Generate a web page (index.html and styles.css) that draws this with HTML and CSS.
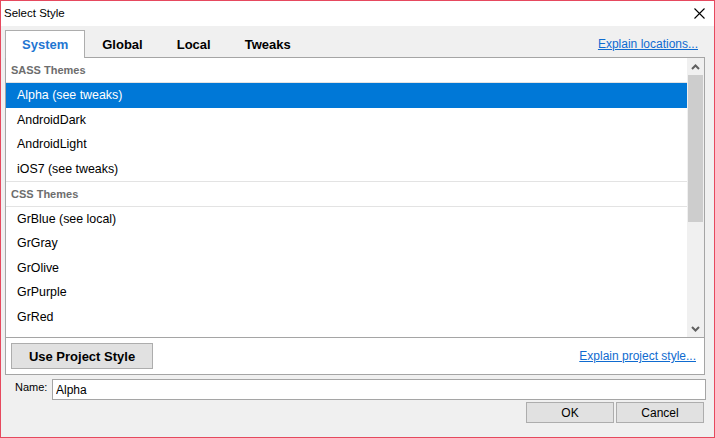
FILE: index.html
```html
<!DOCTYPE html>
<html lang="en">
<head>
    <meta charset="UTF-8">
    <title>Select Style</title>
    <link rel="stylesheet" href="styles.css">
</head>
<body>
    <div class="dialog">
        <div class="titlebar">
            <span class="titlebar__title">Select Style</span>
            <span class="titlebar__close">
                <svg width="11" height="11" viewBox="0 0 11 11">
                    <path d="M0.5 0.5 L10.5 10.5 M10.5 0.5 L0.5 10.5" stroke="#000" stroke-width="1.1" fill="none"/>
                </svg>
            </span>
        </div>

        <div class="dialog__body">
            <div class="tabs">
                <div class="tabs__nav">
                    <button class="tabs__btn tabs__btn--active">System</button>
                    <button class="tabs__btn">Global</button>
                    <button class="tabs__btn">Local</button>
                    <button class="tabs__btn">Tweaks</button>
                </div>
                <a class="link tabs__link" href="#">Explain locations...</a>
            </div>

            <div class="panel">
                <div class="themes">
                    <ul class="themes__list">
                        <li class="themes__group themes__group--first">SASS Themes</li>
                        <li class="themes__item themes__item--selected">Alpha (see tweaks)</li>
                        <li class="themes__item">AndroidDark</li>
                        <li class="themes__item">AndroidLight</li>
                        <li class="themes__item">iOS7 (see tweaks)</li>
                        <li class="themes__group">CSS Themes</li>
                        <li class="themes__item">GrBlue (see local)</li>
                        <li class="themes__item">GrGray</li>
                        <li class="themes__item">GrOlive</li>
                        <li class="themes__item">GrPurple</li>
                        <li class="themes__item">GrRed</li>
                    </ul>
                    <div class="scrollbar">
                        <span class="scrollbar__arrow">
                            <svg width="9" height="6" viewBox="0 0 9 6">
                                <polyline points="1,5 4.5,1.5 8,5" stroke="#606060" stroke-width="2" fill="none"/>
                            </svg>
                        </span>
                        <span class="scrollbar__track">
                            <span class="scrollbar__thumb"></span>
                        </span>
                        <span class="scrollbar__arrow">
                            <svg width="9" height="6" viewBox="0 0 9 6">
                                <polyline points="1,1 4.5,4.5 8,1" stroke="#606060" stroke-width="2" fill="none"/>
                            </svg>
                        </span>
                    </div>
                </div>
                <div class="panel__footer">
                    <button class="btn btn--large">Use Project Style</button>
                    <a class="link" href="#">Explain project style...</a>
                </div>
            </div>

            <div class="name-row">
                <label class="name-row__label" for="style-name">Name:</label>
                <input class="name-row__input" id="style-name" type="text" value="Alpha">
            </div>

            <div class="actions">
                <button class="btn">OK</button>
                <button class="btn">Cancel</button>
            </div>
        </div>
    </div>
</body>
</html>
```

FILE: styles.css
```css
* {
    box-sizing: border-box;
}

body {
    margin: 0;
    font-family: "Liberation Sans", Arial, sans-serif;
    font-size: 12px;
    color: #000;
}

.dialog {
    width: 715px;
    height: 438px;
    border: 1px solid #e6495e;
    background: #f0f0f0;
    display: flex;
    flex-direction: column;
}

/* Title bar */
.titlebar {
    height: 25px;
    background: #fff;
    display: flex;
    align-items: center;
    justify-content: space-between;
    padding: 0 9px 0 3px;
}

.titlebar__title {
    font-size: 11.5px;
    margin-top: -1px;
}

.titlebar__close {
    display: flex;
    margin-top: -1px;
}

.dialog__body {
    flex: 1;
    padding: 0 9px 0 4px;
    display: flex;
    flex-direction: column;
}

/* Tabs */
.tabs {
    height: 31px;
    display: flex;
    align-items: flex-end;
    justify-content: space-between;
}

.tabs__nav {
    display: flex;
    align-items: flex-end;
}

.tabs__btn {
    position: relative;
    z-index: 1;
    height: 27px;
    margin-bottom: -1px;
    padding: 0 16px 1px;
    border: 1px solid transparent;
    border-bottom: none;
    background: transparent;
    font-family: inherit;
    font-size: 13px;
    font-weight: bold;
    color: #000;
    cursor: pointer;
}

.tabs__btn--active {
    height: 28px;
    background: #fff;
    border-color: #adadad;
    color: #1f76d2;
}

.tabs__link {
    margin: 0 7px 6px 0;
}

.link {
    color: #0f6bd0;
    text-decoration: underline;
    font-size: 12px;
}

/* Main panel */
.panel {
    height: 318px;
    border: 1px solid #a5a5a5;
    background: #fff;
    display: flex;
    flex-direction: column;
}

.themes {
    height: 280px;
    border-bottom: 1px solid #a5a5a5;
    display: flex;
    overflow: hidden;
}

.themes__list {
    flex: 1;
    margin: 0;
    padding: 0;
    list-style: none;
    overflow: hidden;
}

.themes__group {
    height: 25.5px;
    padding-left: 5px;
    display: flex;
    align-items: center;
    border-top: 1px solid #e3e3e3;
    border-bottom: 1px solid #e3e3e3;
    font-size: 11px;
    font-weight: bold;
    color: #6d6d6d;
}

.themes__group--first {
    height: 25px;
    border-top: none;
}

.themes__item {
    height: 24.5px;
    padding-left: 11px;
    display: flex;
    align-items: center;
    font-size: 12.4px;
}

.themes__item--selected {
    background: #0078d7;
    color: #fff;
}

/* Scrollbar */
.scrollbar {
    width: 17px;
    background: #f0f0f0;
    display: flex;
    flex-direction: column;
}

.scrollbar__arrow {
    height: 17px;
    display: flex;
    align-items: center;
    justify-content: center;
}

.scrollbar__track {
    flex: 1;
    padding: 0 1px;
}

.scrollbar__thumb {
    display: block;
    height: 147px;
    background: #cdcdcd;
}

.panel__footer {
    flex: 1;
    padding: 0 8px 0 5px;
    display: flex;
    align-items: center;
    justify-content: space-between;
}

/* Buttons */
.btn {
    height: 21px;
    width: 88px;
    border: 1px solid #adadad;
    background: #e1e1e1;
    font-family: inherit;
    font-size: 12px;
    color: #000;
    padding: 0;
}

.btn--large {
    width: 142px;
    height: 26px;
    font-size: 13px;
    font-weight: bold;
}

/* Name field */
.name-row {
    margin-top: 4px;
    margin-right: -1px;
    padding-left: 10px;
    display: flex;
    align-items: flex-start;
}

.name-row__label {
    width: 37px;
    font-size: 11px;
    padding-top: 2px;
}

.name-row__input {
    flex: 1;
    height: 21px;
    border: 1px solid #a5a5a5;
    padding: 0 3px;
    font-family: inherit;
    font-size: 12px;
    outline: none;
}

.actions {
    margin-top: 2px;
    margin-right: 1px;
    display: flex;
    justify-content: flex-end;
    gap: 2px;
}
```
